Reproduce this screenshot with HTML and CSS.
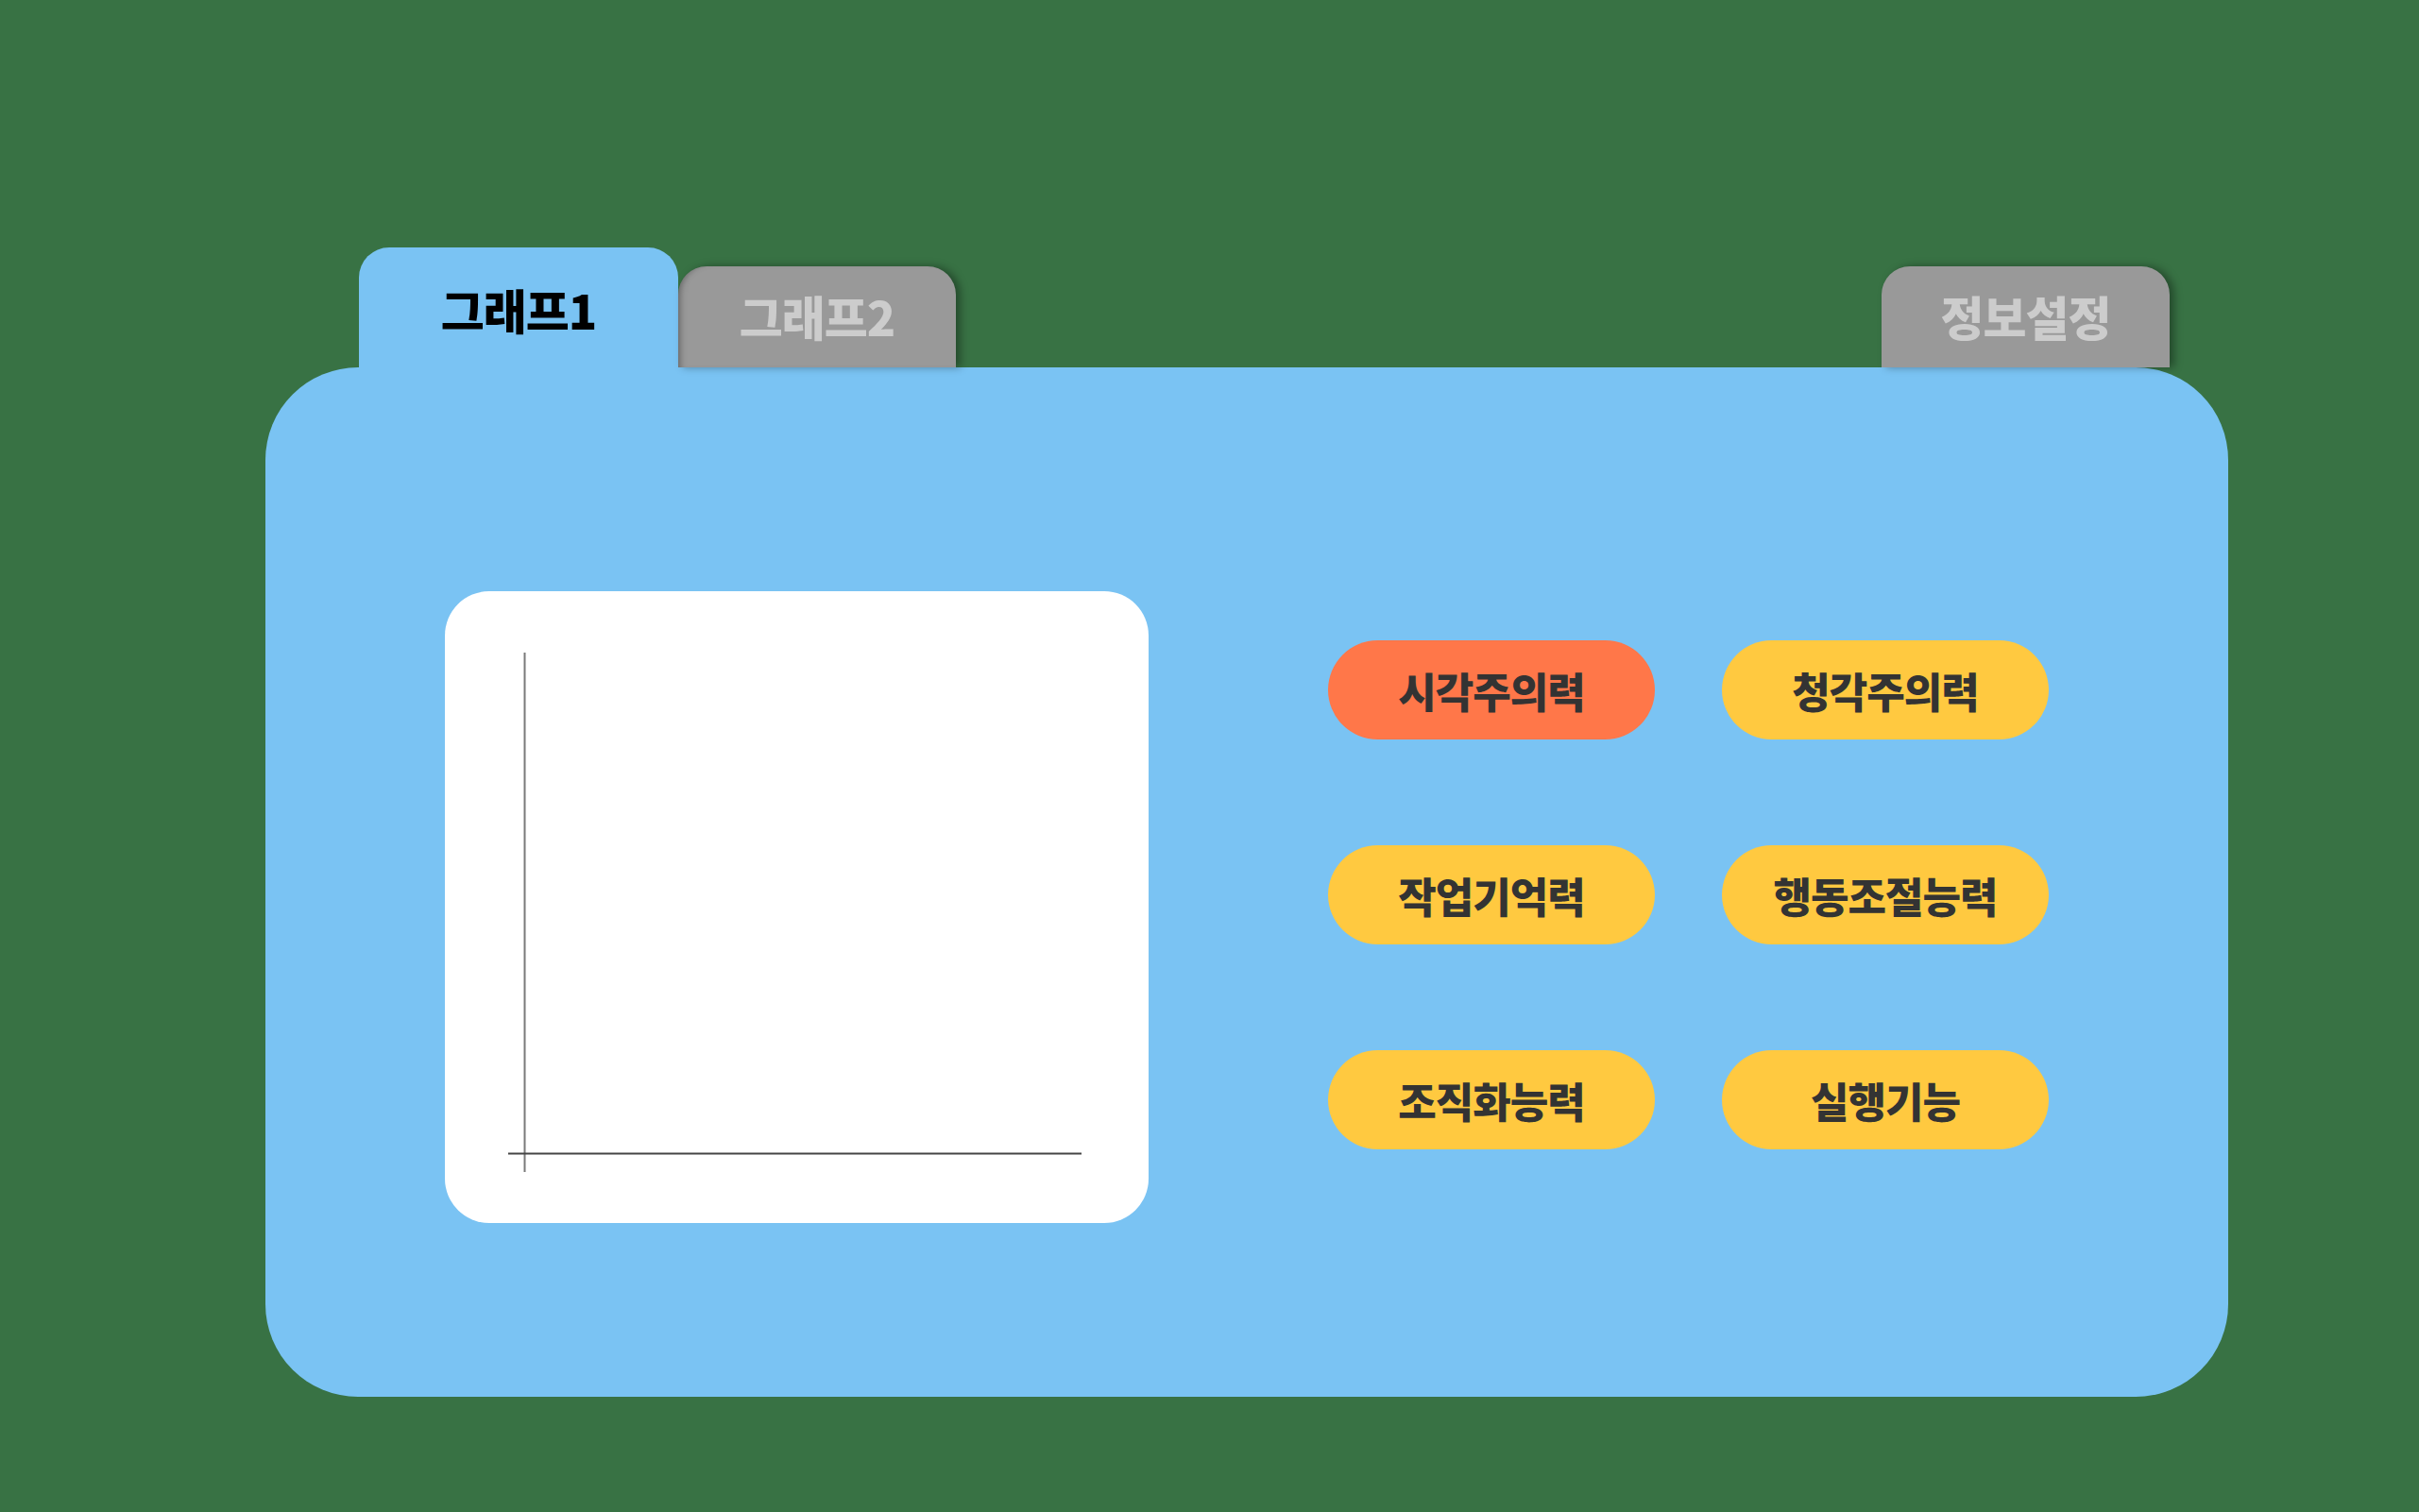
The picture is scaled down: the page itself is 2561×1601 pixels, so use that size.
FILE: index.html
```html
<!DOCTYPE html>
<html lang="ko">
<head>
<meta charset="utf-8">
<title>그래프</title>
<link rel="stylesheet" href="styles.css">
</head>
<body>
<div class="stage">
  <div class="tabs">
    <div class="tab tab-active">그래프1</div>
    <div class="tab tab-gray tab-second">그래프2</div>
    <div class="tab-spacer"></div>
    <div class="tab tab-gray tab-info">정보설정</div>
  </div>
  <div class="panel">
    <div class="chart">
      <svg class="axes" width="745" height="669" viewBox="0 0 745 669">
        <line x1="84.5" y1="65" x2="84.5" y2="615" stroke="#7a7a7a" stroke-width="2"/>
        <line x1="67" y1="595.5" x2="674" y2="595.5" stroke="#444" stroke-width="2"/>
      </svg>
    </div>
    <div class="buttons">
      <div class="pill pill-active">시각주의력</div>
      <div class="pill">청각주의력</div>
      <div class="pill">작업기억력</div>
      <div class="pill">행동조절능력</div>
      <div class="pill">조직화능력</div>
      <div class="pill">실행기능</div>
    </div>
  </div>
</div>
</body>
</html>
```

FILE: styles.css
```css
html, body {
  margin: 0;
  padding: 0;
}
body {
  background: #387244;
  width: 2561px;
  height: 1601px;
  overflow: hidden;
  font-family: "Noto Sans CJK KR", "Noto Sans", sans-serif;
}
.stage {
  padding-top: 262px;
  padding-left: 281px;
  width: 2078px;
}
.tabs {
  display: flex;
  align-items: flex-end;
  height: 127px;
  padding-left: 99px;
  padding-right: 62px;
}
.tab {
  box-sizing: border-box;
  text-align: center;
  font-size: 50px;
  font-weight: 900;
  line-height: 56px;
  border-radius: 32px 32px 0 0;
  letter-spacing: -1px;
}
.tab-active {
  width: 338px;
  height: 127px;
  padding-top: 37px;
  background: #7ac3f3;
  color: #000;
}
.tab-gray {
  height: 107px;
  padding-top: 24px;
  background: #999999;
  color: #cccccc;
  border-radius: 30px 30px 0 0;
}
.tab-second {
  width: 294px;
  box-shadow: inset 7px 0 7px -5px rgba(0, 0, 0, 0.35), 5px 0 8px rgba(0, 0, 0, 0.35);
}
.tab-info {
  width: 305px;
  box-shadow: 5px 0 8px rgba(0, 0, 0, 0.35);
}
.tab-spacer {
  flex: 1;
}
.panel {
  box-sizing: border-box;
  width: 2078px;
  height: 1090px;
  background: #7ac3f3;
  border-radius: 98px;
  padding-top: 237px;
  padding-left: 190px;
  display: flex;
  align-items: flex-start;
}
.chart {
  width: 745px;
  height: 669px;
  background: #ffffff;
  border-radius: 47px;
  flex: none;
}
.axes {
  display: block;
}
.buttons {
  margin-left: 190px;
  margin-top: 52px;
  display: grid;
  grid-template-columns: 346px 346px;
  grid-auto-rows: 105px;
  column-gap: 71px;
  row-gap: 112px;
}
.pill {
  background: #ffc940;
  border-radius: 53px;
  display: flex;
  align-items: center;
  justify-content: center;
  font-size: 44px;
  font-weight: 900;
  color: #333333;
  letter-spacing: -1px;
}
.pill-active {
  background: #ff7749;
}
```
